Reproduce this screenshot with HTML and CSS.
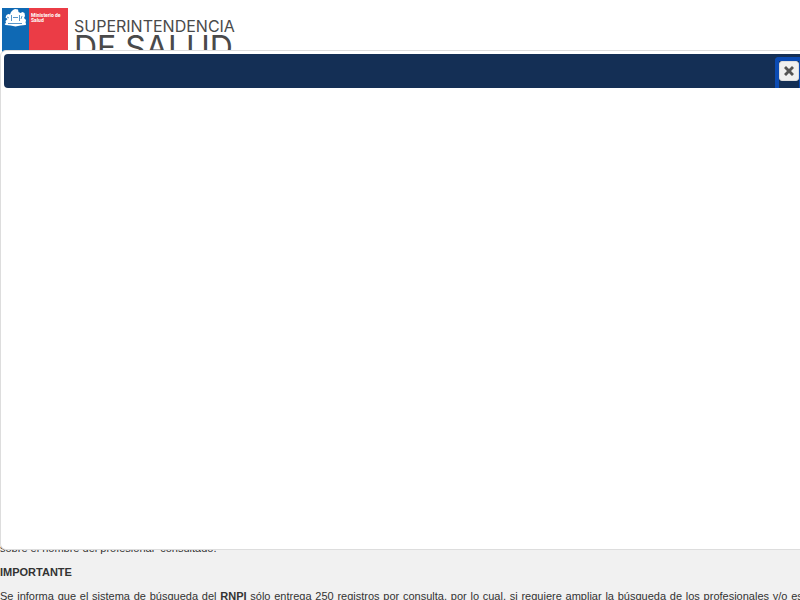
FILE: index.html
```html
<!DOCTYPE html>
<html lang="es">
<head>
<meta charset="utf-8">
<title>Superintendencia de Salud</title>
<link rel="stylesheet" href="styles.css">
</head>
<body>
<div class="page">
  <header class="brand">
    <div class="flag">
      <div class="flag-blue">
        <svg class="crest" viewBox="0 0 22 18" aria-hidden="true">
          <path d="M9 1l2-1 3 .5.500 2.500 2 1 2-1 2 1 .5 3-1 2 2 2-.5 3 1 1-1 1-5 .5-5 1-5-1-5-.5-1-1 1.500-1-.5-2 2-2-2-1.500 1-2.500 2-1 1.500.5L7 3z"/>
          <path class="crest-line" d="M7.500 6v6M15.500 6v6M9 8.500h5M3 8l2 1M18 7l-1 3M4 14.500l14 0"/>
        </svg>
      </div>
      <div class="flag-red">Ministerio de<br>Salud</div>
    </div>
    <div class="brand-name">
      <span class="brand-top">SUPERINTENDENCIA</span>
      <span class="brand-main">DE SALUD</span>
    </div>
  </header>
  <main class="content">
    <p>sobre el nombre del profesional&nbsp; consultado.</p>
    <p><strong>IMPORTANTE</strong></p>
    <p class="notice">Se informa que el sistema de búsqueda del <strong>RNPI</strong> sólo entrega 250 registros por consulta, por lo cual, si requiere ampliar la búsqueda de los profesionales y/o especialidades</p>
  </main>
</div>
<div class="dialog" role="dialog" aria-label="Aviso">
  <div class="dialog-bar">
    <button class="close" type="button" aria-label="Cerrar">
      <svg viewBox="0 0 10 10" aria-hidden="true"><path d="M2 0l3 3 3-3 2 2-3 3 3 3-2 2-3-3-3 3-2-2 3-3-3-3z"/></svg>
    </button>
  </div>
</div>
</body>
</html>
```

FILE: styles.css
```css
* { box-sizing: border-box; }

body {
  margin: 0;
  height: 100vh;
  overflow: hidden;
  background: #fff;
  color: #333;
  font: 11px/16px "Liberation Sans", Arial, sans-serif;
}

.page {
  display: flex;
  flex-direction: column;
  min-width: 864px;
}

.brand {
  display: flex;
  gap: 6px;
  height: 80px;
  padding: 8px 2px;
}

.flag {
  display: flex;
  width: 66px;
}

.flag-blue {
  flex: 0 0 27px;
  padding: 1px 2px;
  background: #0f69b4;
}

.crest {
  display: block;
  width: 22px;
  height: 18px;
  fill: #fff;
}

.crest-line {
  fill: none;
  stroke: #0f69b4;
  stroke-width: 0.7;
}

.flag-red {
  flex: 1;
  padding: 5px 2px;
  background: #eb3c46;
  color: #fff;
  font: bold 5px/5px "Roboto", sans-serif;
  white-space: nowrap;
}

.brand-name {
  display: flex;
  flex-direction: column;
  padding-top: 11px;
  color: #4a4a4a;
  font-family: "Inter", sans-serif;
  white-space: nowrap;
}

.brand-top {
  font-size: 16px;
  line-height: 14px;
}

.brand-main {
  font-size: 32px;
  line-height: 30px;
}

.content {
  padding-top: 460px;
  background: #f1f1f1;
}

.content p {
  margin: 0 0 8px;
}

.content .notice {
  text-align: justify;
  text-align-last: justify;
}

.dialog {
  position: absolute;
  top: 50px;
  left: 0;
  width: calc(100% + 10px);
  height: 500px;
  padding: 3px;
  border: 1px solid #ddd;
  border-radius: 6px;
  background: #fff;
}

.dialog-bar {
  display: flex;
  justify-content: flex-end;
  height: 34px;
  padding: 7px;
  overflow: hidden;
  border-radius: 4px;
  background: #142f55;
}

.close {
  position: relative;
  display: grid;
  place-items: center;
  width: 20px;
  height: 20px;
  padding: 0;
  border: 1px solid #ddd;
  border-radius: 3px;
  outline: none;
  background: #f0f0f0;
}

/* Focus ring, open along the lower edge of the title bar */
.close::before {
  content: "";
  position: absolute;
  inset: -5px -5px -8px;
  border: 4px solid #0b4bb3;
  border-bottom: 0;
  border-radius: 4px 4px 0 0;
}

.close svg {
  width: 10px;
  height: 10px;
  fill: #555;
}
```
